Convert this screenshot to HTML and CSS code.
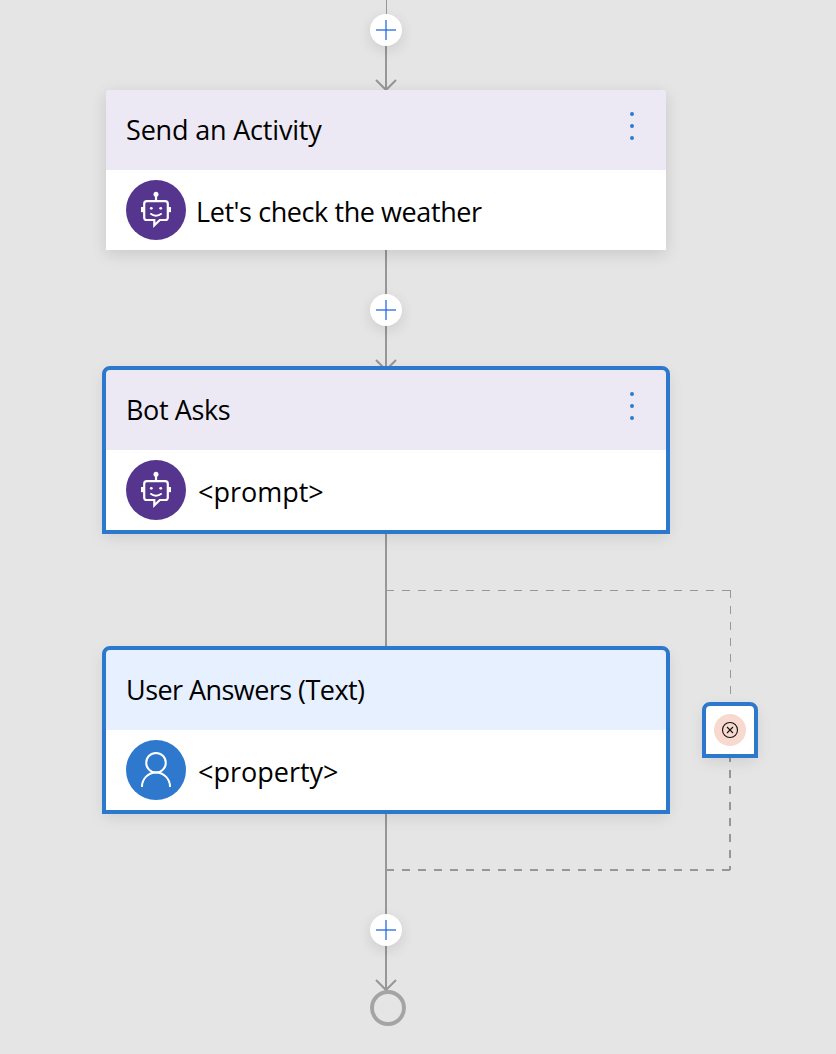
FILE: index.html
```html
<!DOCTYPE html>
<html lang="en">
<head>
<meta charset="utf-8">
<title>Dialog flow</title>
<link rel="stylesheet" href="styles.css">
</head>
<body>
<svg class="defs" width="0" height="0">
  <symbol id="bot" viewBox="0 0 60 60">
    <g fill="none" stroke="#fff" stroke-width="2.200">
      <path d="M30 15v6"/>
      <path d="M28.300 40H20.800a2.600 2.600 0 0 1-2.600-2.600V23.800a2.600 2.600 0 0 1 2.600-2.600h18.400a2.600 2.600 0 0 1 2.600 2.600v13.600a2.600 2.600 0 0 1-2.600 2.600h-5.400L28.300 45.300z"/>
      <path d="M24.300 33.500q5.700 4.400 11.400 0" stroke-width="2"/>
    </g>
    <g fill="#fff">
      <circle cx="30" cy="14.300" r="2.500"/>
      <rect x="15" y="27" width="2.800" height="5.200"/>
      <rect x="42.200" y="27" width="2.800" height="5.200"/>
      <circle cx="25.300" cy="28.300" r="1.400"/>
      <circle cx="34.700" cy="28.300" r="1.400"/>
    </g>
  </symbol>
  <symbol id="user" viewBox="0 0 60 60">
    <g fill="none" stroke="#fff" stroke-width="2">
      <circle cx="30" cy="22.700" r="9.800"/>
      <path d="M16 47v-.5a14 14 0 0 1 28 0v.5"/>
    </g>
  </symbol>
  <symbol id="plus" viewBox="0 0 32 32">
    <rect x="6" y="15" width="20" height="2" fill="#2266e3" fill-opacity=".63"/>
    <rect x="15" y="6" width="2" height="20" fill="#2266e3" fill-opacity=".63"/>
  </symbol>
  <symbol id="dots" viewBox="0 0 4 28">
    <circle cx="2" cy="2" r="2"/><circle cx="2" cy="14" r="2"/><circle cx="2" cy="26" r="2"/>
  </symbol>
</svg>
<main class="canvas">
  <svg class="edges" width="836" height="1054" viewBox="0 0 836 1054">
    <path class="thin" d="M386.500 0V14"/>
    <path d="M386 30V90M386 250V370M386 534V650M386 814V990"/>
    <path d="M376 80l10 10 10-10M376 360l10 10 10-10M376 980l10 10 10-10"/>
    <path class="thin dashed" d="M386 590.500H730M730.500 590V706"/>
    <path class="dashed" d="M730 754V870M386 870H730"/>
  </svg>

  <button class="add add-1"><svg><use href="#plus"/></svg></button>
  <button class="add add-2"><svg><use href="#plus"/></svg></button>
  <button class="add add-3"><svg><use href="#plus"/></svg></button>

  <section class="card activity">
    <header class="head"><span class="t-send">Send an Activity</span><svg class="menu"><use href="#dots"/></svg></header>
    <div class="body"><svg class="avatar"><use href="#bot"/></svg><span class="t-weather">Let's check the weather</span></div>
  </section>
  <section class="card asks selected">
    <header class="head"><span class="t-asks">Bot Asks</span><svg class="menu"><use href="#dots"/></svg></header>
    <div class="body"><svg class="avatar"><use href="#bot"/></svg><span class="t-prompt">&lt;prompt&gt;</span></div>
  </section>
  <section class="card answers selected">
    <header class="head"><span class="t-answers">User Answers (Text)</span></header>
    <div class="body"><svg class="avatar"><use href="#user"/></svg><span class="t-property">&lt;property&gt;</span></div>
  </section>

  <div class="invalid selected">
    <svg width="32" height="32" viewBox="0 0 32 32">
      <circle cx="16" cy="16" r="16" fill="#f8d9cf"/>
      <g fill="none" stroke="#111" stroke-width="1.100"><circle cx="16" cy="16" r="7.500"/><path d="M13 13l6 6M19 13l-6 6"/></g>
    </svg>
  </div>
  <div class="end"></div>
</main>
</body>
</html>
```
FILE: styles.css
```css
body {
  margin: 0;
  background: #e5e5e5;
  font-family: "Open Sans", "Noto Sans", sans-serif;
  font-weight: 370;
  color: #000;
}

.defs { position: absolute; }

.canvas {
  position: relative;
  width: 836px;
  height: 1054px;
  overflow: hidden;
}

.edges { position: absolute; left: 0; top: 0; }
.edges path { fill: none; stroke: #979797; stroke-width: 2; }
.edges .thin { stroke-width: 1; }
.edges .dashed { stroke-dasharray: 8 8; }

.add {
  position: absolute;
  left: 370px;
  width: 32px;
  height: 32px;
  padding: 0;
  border: 0;
  border-radius: 50%;
  background: #fff;
  box-shadow: 0 4px 14px rgba(0, 0, 0, .11);
}
.add svg { display: block; width: 32px; height: 32px; }
.add-1 { top: 14px; }
.add-2 { top: 294px; }
.add-3 { top: 914px; }

.card {
  position: absolute;
  left: 106px;
  width: 560px;
  height: 160px;
  border-radius: 4px 4px 0 0;
  background: #fff;
  box-shadow: 0 4px 16px rgba(0, 0, 0, .13);
  font-size: 27px;
  line-height: 36px;
  white-space: nowrap;
}
.activity { top: 90px; }
.asks { top: 370px; }
.answers { top: 650px; }

.selected::before {
  content: "";
  position: absolute;
  inset: -4px;
  border: 4px solid #2c78cc;
  border-radius: 8px 8px 0 0;
}
.selected { box-shadow: 0 5px 16px 2px rgba(0, 0, 0, .1); }

.head {
  display: flex;
  justify-content: space-between;
  box-sizing: border-box;
  height: 80px;
  padding: 22px 32px 0 20px;
  border-radius: 4px 4px 0 0;
  background: #ede9f4;
}
.answers .head { background: #e6f0ff; }
.menu { width: 4px; height: 28px; fill: #2c7bd3; }

.body {
  display: flex;
  gap: 10px;
  padding: 10px 20px;
}
.body span { padding-top: 14px; }
.avatar { width: 60px; height: 60px; border-radius: 50%; background: #55358d; }
.answers .avatar { background: #2e79cd; }

.t-send { letter-spacing: -.18px; }
.t-weather { letter-spacing: -.42px; }
.t-asks { letter-spacing: -.38px; }
.t-answers { letter-spacing: -.55px; }
.t-prompt, .t-property { margin-left: 2px; }

.invalid {
  position: absolute;
  left: 706px;
  top: 706px;
  display: grid;
  place-items: center;
  width: 48px;
  height: 48px;
  border-radius: 4px 4px 0 0;
  background: #fff;
}

.end {
  position: absolute;
  left: 370px;
  top: 990px;
  box-sizing: border-box;
  width: 36px;
  height: 36px;
  border: 4px solid #a4a4a4;
  border-radius: 50%;
}
```
